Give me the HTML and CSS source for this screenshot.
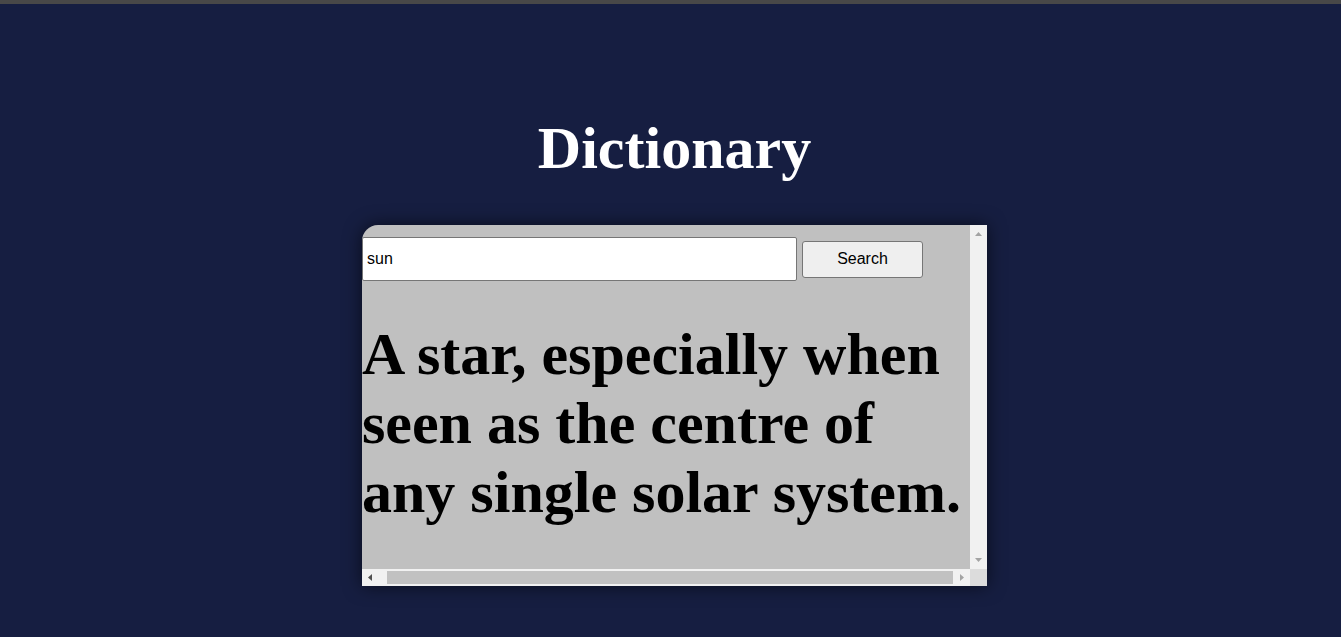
FILE: index.html
```html
<!DOCTYPE html>
<html lang="en">
<head>
<meta charset="utf-8">
<title>Dictionary</title>
<link rel="stylesheet" href="styles.css">
</head>
<body>
<div class="topbar"></div>
<main class="page">
  <h1 class="title">Dictionary</h1>
  <section class="card">
    <div class="card-content">
      <form class="search-row" onsubmit="return false">
        <input class="search-input" type="text" value="sun">
        <button class="search-btn" type="button">Search</button>
      </form>
      <h2 class="definition">A star, especially when seen as the centre of any single solar system.</h2>
    </div>
    <div class="vbar">
      <span class="sb-btn"><svg width="17" height="17" viewBox="0 0 17 17"><path d="M5 11h7L8.5 7z" fill="#a3a3a3"/></svg></span>
      <span class="sb-btn"><svg width="17" height="17" viewBox="0 0 17 17"><path d="M5 6h7L8.5 10z" fill="#a3a3a3"/></svg></span>
    </div>
    <div class="hbar">
      <span class="sb-btn"><svg width="17" height="17" viewBox="0 0 17 17"><path d="M10 5v7L6 8.5z" fill="#505050"/></svg></span>
      <div class="htrack"><div class="hthumb"></div></div>
      <span class="sb-btn"><svg width="17" height="17" viewBox="0 0 17 17"><path d="M7 5v7L11 8.5z" fill="#a3a3a3"/></svg></span>
    </div>
    <div class="sb-corner"></div>
  </section>
</main>
</body>
</html>
```

FILE: styles.css
```css
html, body {
  margin: 0;
  padding: 0;
}
body {
  background: #161e41;
  font-family: "Liberation Serif", "Times New Roman", serif;
  height: 637px;
  overflow: hidden;
}
.topbar {
  height: 4px;
  background: #484848;
}
.page {
  display: flex;
  flex-direction: column;
  align-items: center;
  padding: 110px 0 0 8px;
}
.title {
  margin: 0;
  font-size: 60px;
  line-height: 69px;
  font-weight: bold;
  color: #ffffff;
}
.card {
  margin-top: 42px;
  display: grid;
  grid-template-columns: 608px 17px;
  grid-template-rows: 344px 17px;
  background: #c0c0c0;
  border-top-left-radius: 16px;
  box-shadow: 0 0 18px rgba(0, 0, 0, 0.6);
  overflow: hidden;
}
.card-content {
  overflow: hidden;
  padding-top: 12px;
  box-sizing: border-box;
}
.search-row {
  display: flex;
  align-items: center;
  gap: 5px;
  margin: 0;
}
.search-input {
  width: 435px;
  height: 44px;
  box-sizing: border-box;
  margin: 0;
  padding: 0 4px;
  border: 1px solid #767676;
  border-radius: 2px;
  background: #ffffff;
  font-family: "Liberation Sans", Arial, sans-serif;
  font-size: 16px;
  color: #000;
}
.search-btn {
  width: 121px;
  height: 37px;
  box-sizing: border-box;
  margin: 0;
  padding: 0;
  border: 1px solid #767676;
  border-radius: 3px;
  background: #efefef;
  font-family: "Liberation Sans", Arial, sans-serif;
  font-size: 16px;
  color: #000;
}
.definition {
  margin: 39px 0 0 0;
  font-size: 60px;
  line-height: 69px;
  font-weight: bold;
  color: #000;
}

/* drawn scrollbars */
.sb-btn {
  display: block;
  width: 17px;
  height: 17px;
  flex: none;
}
.sb-btn svg {
  display: block;
}
.vbar {
  background: #f1f1f1;
  display: flex;
  flex-direction: column;
  justify-content: space-between;
}
.hbar {
  background: #f1f1f1;
  display: flex;
}
.htrack {
  flex: 1;
  padding: 2px 0 2px 8px;
  display: flex;
}
.hthumb {
  flex: 1;
  background: #c1c1c1;
}
.sb-corner {
  background: #dcdcdc;
}
```
